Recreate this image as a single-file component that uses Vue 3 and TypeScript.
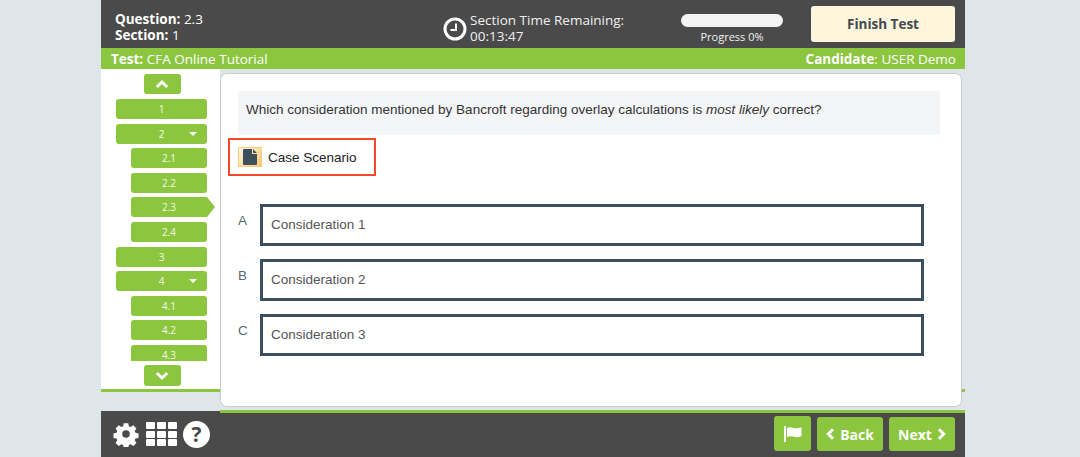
<script setup lang="ts">
interface NavItem { label: string; sub?: boolean; caret?: boolean; current?: boolean }
const nav: NavItem[] = [
  { label: '1' },
  { label: '2', caret: true },
  { label: '2.1', sub: true },
  { label: '2.2', sub: true },
  { label: '2.3', sub: true, current: true },
  { label: '2.4', sub: true },
  { label: '3' },
  { label: '4', caret: true },
  { label: '4.1', sub: true },
  { label: '4.2', sub: true },
  { label: '4.3', sub: true },
]
const options = [
  { key: 'A', text: 'Consideration 1' },
  { key: 'B', text: 'Consideration 2' },
  { key: 'C', text: 'Consideration 3' },
]
</script>

<template>
  <div class="page">
    <div class="app">
      <header class="top">
        <div class="q">
          <div><b>Question:</b> 2.3</div>
          <div><b>Section:</b> 1</div>
        </div>
        <div class="timer">
          <svg class="clock" width="24" height="24" viewBox="0 0 24 24">
            <circle cx="12" cy="12" r="10" fill="none" stroke="#fff" stroke-width="3" />
            <path d="M13 6.500v6.500H7.500" fill="none" stroke="#fff" stroke-width="2" />
          </svg>
          <div class="timer-text">Section Time Remaining:<br />00:13:47</div>
        </div>
        <div class="progress">
          <div class="bar"></div>
          <div class="ptext">Progress 0%</div>
        </div>
        <button class="finish">Finish Test</button>
      </header>
      <div class="strip">
        <span><b>Test:</b> CFA Online Tutorial</span>
        <span><b>Candidate</b>: USER Demo</span>
      </div>
      <div class="body">
        <aside class="side">
          <button class="arrow">
            <svg width="14" height="10" viewBox="0 0 14 10"><path d="M1.800 8 7 3l5.200 5" fill="none" stroke="#fff" stroke-width="3" /></svg>
          </button>
          <div class="list">
            <div v-for="n in nav" :key="n.label" class="item" :class="{ sub: n.sub, current: n.current }">
              {{ n.label }}
              <i v-if="n.caret" class="caret"></i>
            </div>
          </div>
          <button class="arrow">
            <svg width="14" height="10" viewBox="0 0 14 10"><path d="M1.800 2 7 7l5.200-5" fill="none" stroke="#fff" stroke-width="3" /></svg>
          </button>
        </aside>
        <main class="card">
          <div class="stem">Which consideration mentioned by Bancroft regarding overlay calculations is <em>most likely</em> correct?</div>
          <div class="case">
            <span class="doc">
              <svg width="14" height="16" viewBox="0 0 14 16"><path d="M0 1A1 1 0 0 1 1 0h8v5h5v10a1 1 0 0 1-1 1H1a1 1 0 0 1-1-1zM10 0l4 4h-4z" fill="#3d4f5c" /></svg>
            </span>
            Case Scenario
          </div>
          <div class="options">
            <div v-for="o in options" :key="o.key" class="opt">
              <span class="key">{{ o.key }}</span>
              <div class="box">{{ o.text }}</div>
            </div>
          </div>
        </main>
      </div>
      <footer class="foot">
        <div class="tools">
          <svg class="gear" width="26" height="26" viewBox="0 0 28 28"><path fill="#fff" fill-rule="evenodd" d="M11.300 1h5.400l.7 3.700 2.200.9 3.100-2.100 3.800 3.800-2.100 3.100.9 2.200 3.700.7v5.400l-3.700.7-.9 2.200 2.100 3.100-3.800 3.800-3.100-2.100-2.200.9-.7 3.700h-5.400l-.7-3.700-2.200-.9-3.100 2.100-3.800-3.800 2.100-3.100-.9-2.200-3.700-.7v-5.400l3.700-.7.900-2.200-2.100-3.100 3.800-3.800 3.100 2.100 2.200-.9zM14 9.500a4.500 4.500 0 1 0 0 9 4.500 4.500 0 0 0 0-9z" transform="translate(1.400 1.400) scale(.9)" /></svg>
          <div class="grid">
            <i v-for="c in 9" :key="c"></i>
          </div>
          <div class="help">?</div>
        </div>
        <div class="actions">
          <button class="btn flag">
            <svg width="18" height="16" viewBox="0 0 18 16"><path fill="#fff" d="M0 0h2v16H0zM3 2c2.500-1.500 4.500-.5 6.500 0s4 .5 6.500-.5c.8-.3 1.500 0 1.500.5v8c-2.500 1.500-5 1.500-7.500.8S5.500 9.700 3 11z" /></svg>
          </button>
          <button class="btn">
            <svg width="9" height="12" viewBox="0 0 9 12"><path d="M7 1.200 2.300 6 7 10.800" fill="none" stroke="#fff" stroke-width="3" /></svg>
            Back
          </button>
          <button class="btn">
            Next
            <svg width="9" height="12" viewBox="0 0 9 12"><path d="M2 1.200 6.700 6 2 10.800" fill="none" stroke="#fff" stroke-width="3" /></svg>
          </button>
        </div>
      </footer>
    </div>
  </div>
</template>

<style>
html, body { margin: 0; background: #dfe6e9; }
</style>

<style scoped>
.page {
  width: 1080px;
  height: 457px;
  overflow: hidden;
  font-family: "Open Sans", sans-serif;
}
.app {
  width: 864px;
  height: 457px;
  margin-left: 101px;
  display: flex;
  flex-direction: column;
}
.top {
  height: 48px;
  box-sizing: border-box;
  background: #4a4a4a;
  color: #fff;
  display: flex;
  align-items: center;
  padding: 6px 10px 0 14px;
  font-size: 13.500px;
  line-height: 16px;
}
.q { width: 328px; }
.timer { display: flex; align-items: center; gap: 3px; width: 238px; padding-top: 2px; }
.clock { margin-top: 1px; }
.timer-text { color: #f0f0f0; }
.progress { width: 102px; display: flex; flex-direction: column; align-items: center; margin-top: 4px; }
.bar { width: 100%; height: 13px; border-radius: 7px; background: #f3f3f3; }
.ptext { font-size: 11px; margin-top: 2px; line-height: 15px; color: #f0f0f0; }
.finish {
  width: 144px;
  height: 36px;
  margin: -6px 0 0 auto;
  border: 0;
  border-radius: 3px;
  background: #fdf5dc;
  color: #424a52;
  font: 700 13.500px "Open Sans", sans-serif;
}
.strip {
  height: 21px;
  background: #8cc63f;
  color: #fff;
  font-size: 13.500px;
  line-height: 23px;
  display: flex;
  justify-content: space-between;
  padding: 0 9px 0 10px;
}
.body {
  flex: 1;
  display: flex;
  min-height: 0;
  background: linear-gradient(transparent 320px, #8cc63f 320px, #8cc63f 323px, transparent 323px);
}
.side {
  width: 119px;
  height: 320px;
  flex: none;
  background: #fff;
  display: flex;
  flex-direction: column;
  align-items: center;
  padding-top: 5px;
  box-sizing: border-box;
}
.arrow {
  width: 37px;
  height: 20px;
  flex: none;
  border: 0;
  border-radius: 3px;
  background: #8cc63f;
  padding: 0;
  display: flex;
  align-items: center;
  justify-content: center;
  margin-left: 3px;
}
.side .arrow:last-child { margin-top: 4px; height: 21px; }
.list {
  width: 119px;
  height: 262px;
  margin: 5px 0 0;
  overflow: hidden;
  flex: none;
  display: flex;
  flex-direction: column;
  gap: 4.600px;
  padding: 0 13px 0 15px;
  box-sizing: border-box;
}
.item {
  height: 20px;
  flex: none;
  background: #8cc63f;
  border-radius: 3px;
  color: #f4fae8;
  font-size: 10px;
  line-height: 20px;
  text-align: center;
  position: relative;
}
.item.sub { margin-left: 15px; }
.item.current { border-radius: 3px 0 0 3px; }
.item.current::after {
  content: "";
  position: absolute;
  left: 100%;
  top: 0;
  border-left: 8px solid #8cc63f;
  border-top: 10px solid transparent;
  border-bottom: 10px solid transparent;
}
.caret {
  position: absolute;
  right: 10px;
  top: 8px;
  border-top: 4px solid #fff;
  border-left: 4px solid transparent;
  border-right: 4px solid transparent;
}
.card {
  width: 742px;
  height: 334px;
  margin-top: 4px;
  box-sizing: border-box;
  background: #fff;
  border: 1px solid #c6cfd0;
  border-radius: 7px;
  padding: 17px 21px 0 7px;
  font-family: "Liberation Sans", Arial, sans-serif;
  color: #333;
  position: relative;
}
.stem {
  margin-left: 10px;
  height: 44px;
  background: #f4f5f7;
  padding-left: 8px;
  font-size: 13.500px;
  line-height: 37px;
  color: #333;
}
.case {
  width: 148px;
  height: 38px;
  margin-top: 3px;
  box-sizing: border-box;
  border: 2px solid #f44a2c;
  display: flex;
  align-items: center;
  gap: 6px;
  padding-left: 8px;
  font-size: 13.500px;
  color: #222;
}
.doc {
  width: 24px;
  height: 20px;
  box-sizing: border-box;
  border: 1px solid #f8cf73;
  background: linear-gradient(135deg, #fff8e8, #fbc775);
  display: flex;
  align-items: center;
  justify-content: center;
}
.options { margin-top: 28px; display: flex; flex-direction: column; gap: 13px; }
.opt { display: flex; margin-left: 10px; }
.key { width: 22px; font-size: 13.500px; color: #5a6a75; line-height: 34px; }
.box {
  width: 664px;
  height: 42px;
  box-sizing: border-box;
  border: 3px solid #3d4f5c;
  padding-left: 8px;
  font-size: 13.500px;
  line-height: 36px;
  color: #555;
}
.foot {
  height: 46px;
  flex: none;
  background: #4a4a4a;
  display: flex;
  align-items: center;
  justify-content: space-between;
  padding: 0 10px 0 12px;
  position: relative;
}
.foot::before {
  content: "";
  position: absolute;
  left: 119px;
  right: 0;
  top: -1px;
  height: 3px;
  background: #8cc63f;
}
.tools { display: flex; align-items: center; }
.grid {
  width: 31px;
  margin-left: 7px;
  display: grid;
  grid-template-columns: repeat(3, 9px);
  grid-auto-rows: 7px;
  gap: 1.500px 2px;
}
.grid i { background: #fff; border-radius: 1px; }
.help {
  width: 27px;
  height: 27px;
  margin-left: 6px;
  border-radius: 50%;
  background: #fff;
  color: #4a4a4a;
  font: 700 21px/27px "Open Sans", sans-serif;
  text-align: center;
}
.actions { display: flex; gap: 6px; }
.btn {
  width: 66px;
  height: 34px;
  border: 0;
  border-radius: 3px;
  background: #8cc63f;
  color: #fff;
  font: 700 14px "Open Sans", sans-serif;
  display: flex;
  align-items: center;
  justify-content: center;
  gap: 5px;
  padding: 0;
}
.btn.flag { width: 37px; height: 35px; margin-top: -1px; }
</style>
